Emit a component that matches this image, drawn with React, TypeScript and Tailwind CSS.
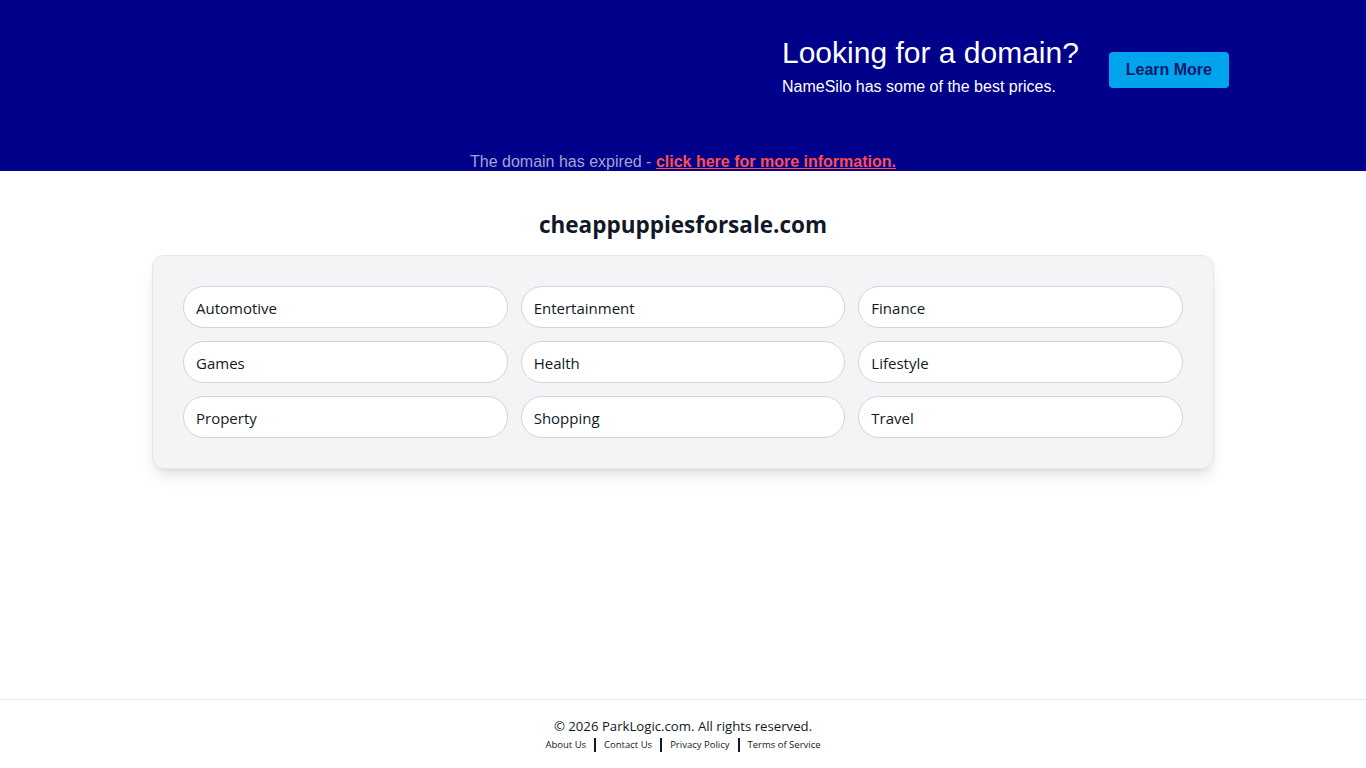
import React from "react";

const categories = [
  "Automotive",
  "Entertainment",
  "Finance",
  "Games",
  "Health",
  "Lifestyle",
  "Property",
  "Shopping",
  "Travel",
];

const footerLinks = ["About Us", "Contact Us", "Privacy Policy", "Terms of Service"];

export default function App() {
  return (
    <div className="min-h-screen flex flex-col bg-white font-['Open_Sans','Noto_Sans',sans-serif]">
      {/* Banner */}
      <div className="h-[171px] bg-[#00008b] flex flex-col font-['Liberation_Sans',Arial,sans-serif]">
        <div className="flex items-start pl-[782px] pt-[35px]">
          <div>
            <h1 className="text-[30px] leading-[36px] text-white">Looking for a domain?</h1>
            <p className="text-[16px] leading-[20px] text-white mt-[6px]">NameSilo has some of the best prices.</p>
          </div>
          <button className="ml-[30px] mt-[17px] w-[120px] h-[36px] rounded-[4px] bg-[#00a4ec] text-[#0a1a6b] font-bold text-[16px]">
            Learn More
          </button>
        </div>
        <div className="mt-auto text-center text-[16px] leading-[20px] text-[#a5a5c9] -mb-[1px]">
          The domain has expired -{" "}
          <a className="text-[#ff4d4d] font-bold underline">click here for more information.</a>
        </div>
      </div>

      {/* Main */}
      <main className="flex flex-col items-center pt-[38px]">
        <h2 className="text-[22.5px] leading-[32px] font-bold text-[#111827]">cheappuppiesforsale.com</h2>
        <div className="mt-[14px] w-[1062px] bg-[#f3f4f6] border border-[#e5e7eb] rounded-xl shadow-lg p-[30px]">
          <div className="grid grid-cols-3 gap-x-[13px] gap-y-[13px]">
            {categories.map((c) => (
              <div
                key={c}
                className="h-[42px] flex items-center px-[12px] pt-[2px] bg-white border border-[#d1d5db] rounded-full text-[15px] text-[#111827]"
              >
                {c}
              </div>
            ))}
          </div>
        </div>
      </main>

      {/* Footer */}
      <footer className="mt-auto border-t border-[#e5e7eb] pt-[16px] pb-[16px] text-center">
        <p className="text-[13.2px] leading-[20px] text-[#111827]">© 2026 ParkLogic.com. All rights reserved.</p>
        <div className="flex justify-center items-center text-[9.5px] leading-[14px] text-[#111827] mt-[2px]">
          {footerLinks.map((l, i) => (
            <React.Fragment key={l}>
              {i > 0 && <span className="mx-[8px] w-[2px] h-[14px] bg-[#111827]" />}
              <a>{l}</a>
            </React.Fragment>
          ))}
        </div>
      </footer>
    </div>
  );
}
